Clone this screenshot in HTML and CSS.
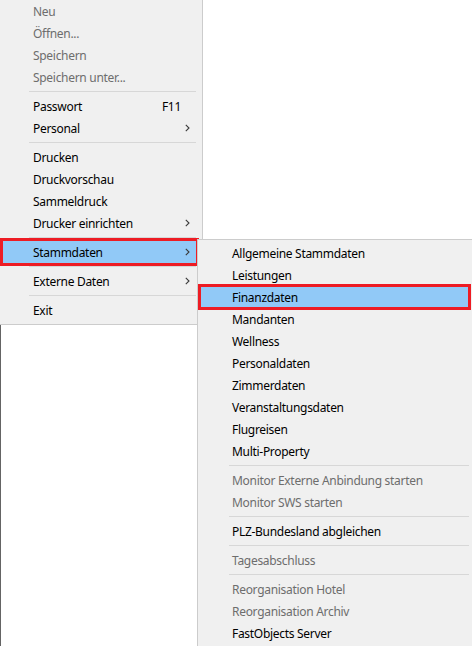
FILE: index.html
```html
<!DOCTYPE html>
<html lang="de">
<head>
<meta charset="utf-8">
<title>Menü</title>
<link rel="stylesheet" href="styles.css">
</head>
<body>
<div class="desktop">
  <div class="backdrop"></div>

  <div class="menu main-menu">
    <div class="item disabled"><span class="label">Neu</span></div>
    <div class="item disabled"><span class="label">Öffnen...</span></div>
    <div class="item disabled"><span class="label">Speichern</span></div>
    <div class="item disabled"><span class="label">Speichern unter...</span></div>
    <div class="sep"></div>
    <div class="item"><span class="label">Passwort</span><span class="shortcut">F11</span></div>
    <div class="item"><span class="label">Personal</span><svg class="chev" viewBox="0 0 5 8" width="5" height="8"><path d="M0.8 0.8 L4 4 L0.8 7.2" fill="none" stroke="#3a3a3a" stroke-width="1.1"/></svg></div>
    <div class="sep"></div>
    <div class="item"><span class="label">Drucken</span></div>
    <div class="item"><span class="label">Druckvorschau</span></div>
    <div class="item"><span class="label">Sammeldruck</span></div>
    <div class="item"><span class="label">Drucker einrichten</span><svg class="chev" viewBox="0 0 5 8" width="5" height="8"><path d="M0.8 0.8 L4 4 L0.8 7.2" fill="none" stroke="#3a3a3a" stroke-width="1.1"/></svg></div>
    <div class="sep"></div>
    <div class="item active marked-main"><span class="label">Stammdaten</span><svg class="chev" viewBox="0 0 5 8" width="5" height="8"><path d="M0.8 0.8 L4 4 L0.8 7.2" fill="none" stroke="#3a3a3a" stroke-width="1.1"/></svg></div>
    <div class="sep"></div>
    <div class="item"><span class="label">Externe Daten</span><svg class="chev" viewBox="0 0 5 8" width="5" height="8"><path d="M0.8 0.8 L4 4 L0.8 7.2" fill="none" stroke="#3a3a3a" stroke-width="1.1"/></svg></div>
    <div class="sep"></div>
    <div class="item"><span class="label">Exit</span></div>
  </div>

  <div class="menu sub-menu">
    <div class="item"><span class="label">Allgemeine Stammdaten</span></div>
    <div class="item"><span class="label">Leistungen</span></div>
    <div class="item active marked-sub"><span class="label">Finanzdaten</span></div>
    <div class="item"><span class="label">Mandanten</span></div>
    <div class="item"><span class="label">Wellness</span></div>
    <div class="item"><span class="label">Personaldaten</span></div>
    <div class="item"><span class="label">Zimmerdaten</span></div>
    <div class="item"><span class="label">Veranstaltungsdaten</span></div>
    <div class="item"><span class="label">Flugreisen</span></div>
    <div class="item"><span class="label">Multi-Property</span></div>
    <div class="sep"></div>
    <div class="item disabled"><span class="label">Monitor Externe Anbindung starten</span></div>
    <div class="item disabled"><span class="label">Monitor SWS starten</span></div>
    <div class="sep"></div>
    <div class="item"><span class="label">PLZ-Bundesland abgleichen</span></div>
    <div class="sep"></div>
    <div class="item disabled"><span class="label">Tagesabschluss</span></div>
    <div class="sep"></div>
    <div class="item disabled"><span class="label">Reorganisation Hotel</span></div>
    <div class="item disabled"><span class="label">Reorganisation Archiv</span></div>
    <div class="item"><span class="label">FastObjects Server</span></div>
  </div>
</div>
</body>
</html>
```

FILE: styles.css
```css
html, body {
  margin: 0;
  padding: 0;
  background: #ffffff;
}

body {
  font-family: "Noto Sans", "Open Sans", sans-serif;
  font-size: 12px;
  letter-spacing: -0.3px;
  color: #000000;
}

.desktop {
  position: relative;
  width: 472px;
  height: 646px;
  overflow: hidden;
  background: #ffffff;
}

.backdrop {
  position: absolute;
  left: 0;
  top: 324px;
  bottom: 0;
  width: 1px;
  background: #646464;
}

.menu {
  position: absolute;
  background: #f0f0f0;
  box-sizing: border-box;
  display: flex;
  flex-direction: column;
}

.main-menu {
  left: 0;
  top: 0;
  width: 203px;
  padding: 0 6px 3px 3px;
  border-right: 1px solid #cccccc;
  border-bottom: 1px solid #cccccc;
}

.sub-menu {
  left: 197px;
  top: 239px;
  width: 275px;
  height: 407px;
  padding: 2px 3px 0 2px;
  border-left: 1px solid #cccccc;
  border-top: 1px solid #cccccc;
  z-index: 2;
}

.item {
  box-sizing: border-box;
  height: 22px;
  padding-top: 2px;
  line-height: 18px;
  display: flex;
  align-items: center;
  white-space: nowrap;
  position: relative;
}

.main-menu .item {
  padding-left: 30px;
}

.sub-menu .item {
  padding-left: 32px;
}

.label {
  flex: 1;
}

.shortcut {
  padding-right: 15px;
}

.chev {
  margin-right: 6px;
  margin-top: -2px;
  display: block;
}

.disabled {
  color: #6d6d6d;
}

.active {
  background: #91c9f7;
}

.marked-main {
  outline: 3px solid #ed1c24;
  outline-offset: 0;
  z-index: 1;
}

.marked-sub {
  outline: 3px solid #ed1c24;
  outline-offset: -1px;
  z-index: 1;
}

.sep {
  height: 1px;
  background: #d7d7d7;
  margin: 3px 0 3px 26px;
}

.sub-menu .sep {
  margin-left: 29px;
}
```
